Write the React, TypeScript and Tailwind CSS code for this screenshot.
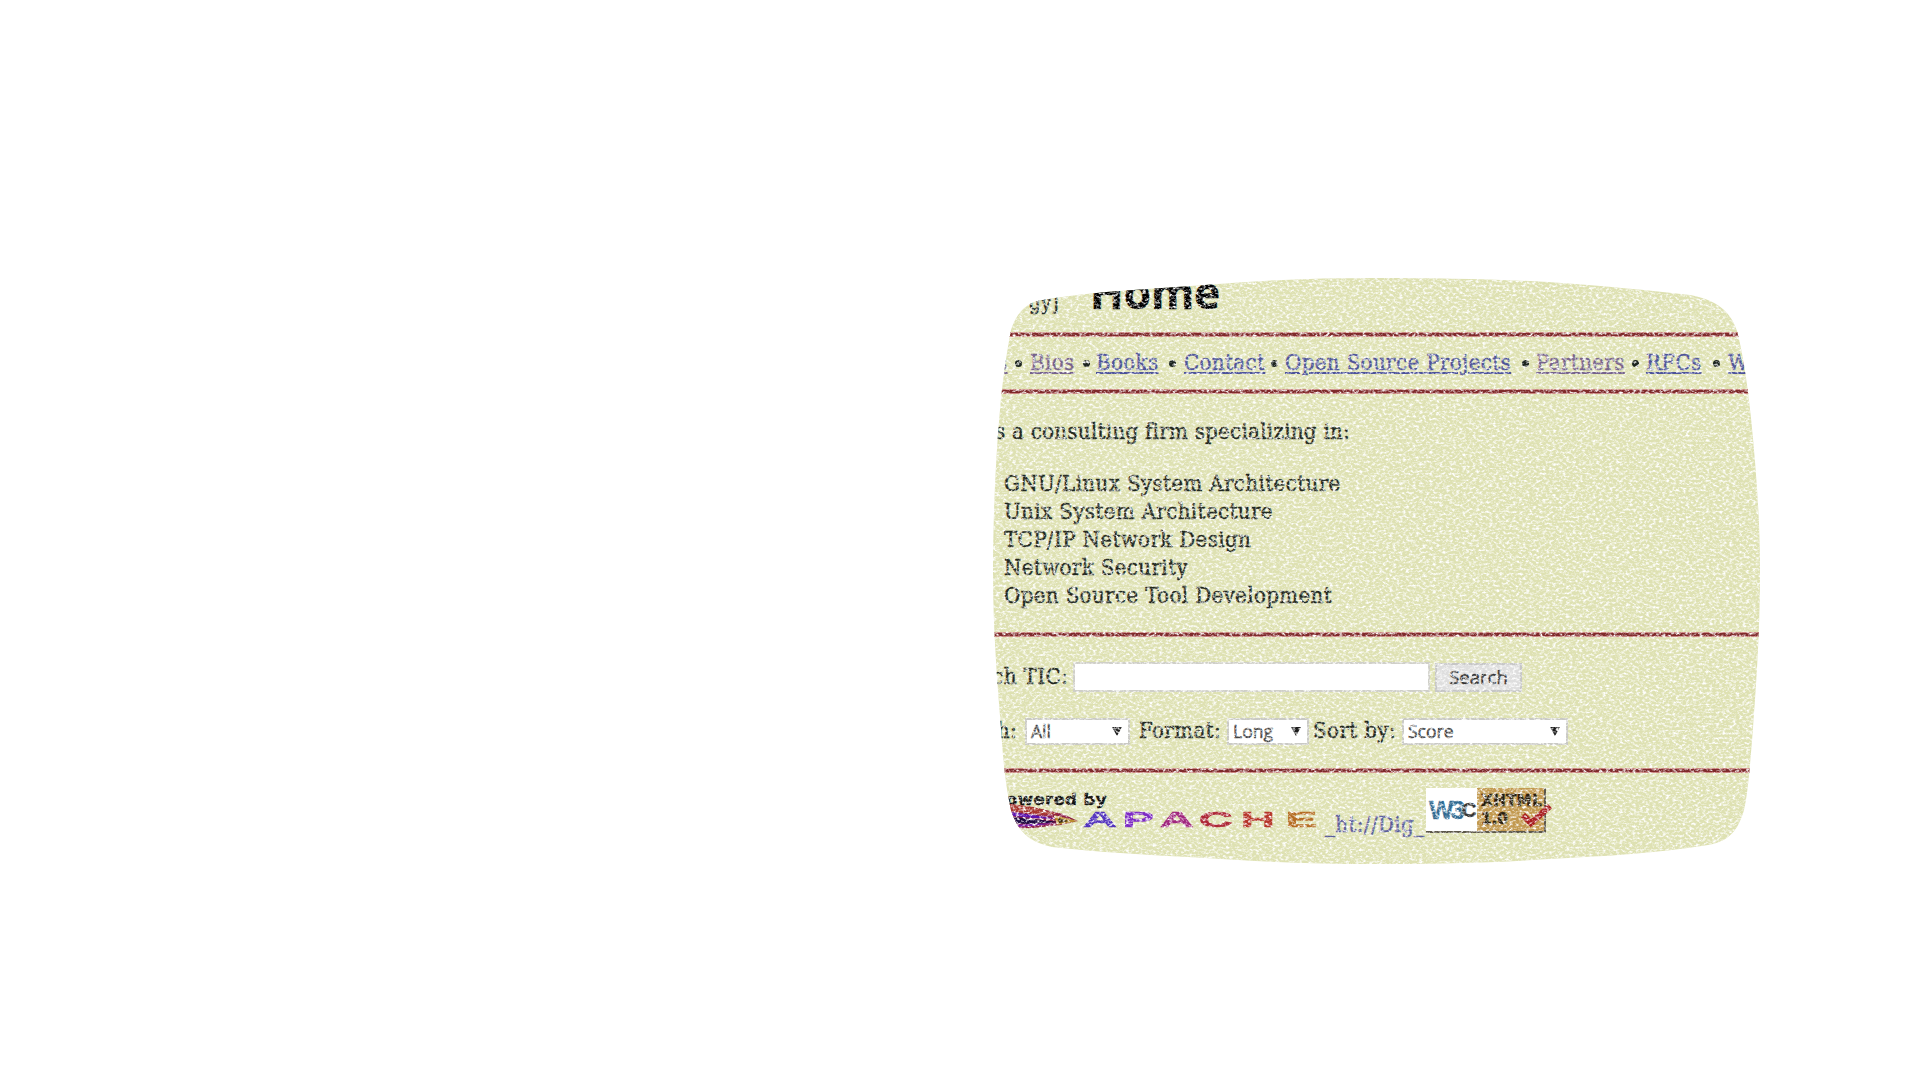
import type { ReactNode } from "react";

const Link = ({ children, visited, width }: { children: string; visited?: boolean; width: string }) => (
  <li className={`${width} flex shrink-0 items-center justify-between`}>
    <a className={visited ? "text-[#75628c] underline decoration-2 underline-offset-2" : "text-[#4d5399] underline decoration-2 underline-offset-2"}>{children}</a>
    <span className="h-[7px] w-[7px] rounded-full bg-[#1c241f]" />
  </li>
);

const Rule = () => <hr className="h-[5px] shrink-0 border-0 border-y border-[#c98580] bg-[#7f2a2b]" />;

const Select = ({ text, width }: { text: string; width: string }) => (
  <span className={`${width} flex h-[27px] shrink-0 items-center justify-between border-2 border-[#c9c9c4] bg-white pr-[6px] pl-[4px] font-['Open_Sans',sans-serif] text-[17.5px] tracking-normal text-[#444] [font-stretch:normal]`}>
    {text}
    <svg width="10" height="9" viewBox="0 0 10 9"><path d="M0 0h10L5 9z" fill="#1c1c1c" /></svg>
  </span>
);

const Letter = ({ children, color, width }: { children: string; color: string; width: string }) => (
  <span className={`${width} ${color} flex justify-center`}>
    <span className="inline-block scale-x-[2.15]">{children}</span>
  </span>
);

const Label = ({ children, width }: { children: ReactNode; width: string }) => (
  <span className={`${width} flex shrink-0 justify-end`}>{children}</span>
);

const Grain = () => (
  <svg className="pointer-events-none absolute inset-0" width="767" height="587">
    <filter id="grain" x="0" y="0" width="100%" height="100%">
      <feTurbulence type="fractalNoise" baseFrequency="0.3 0.42" numOctaves="3" seed="7" />
      <feColorMatrix values="0 0 0 0 1  0 0 0 0 1  0 0 0 0 1  2.8 0 0 0 -1.22" />
    </filter>
    <rect width="767" height="587" filter="url(#grain)" />
  </svg>
);

export default function App() {
  return (
    <main className="h-[1080px] w-[1920px] overflow-hidden bg-white pt-[278px] pl-[993px]">
      <section className="relative flex h-[587px] w-[767px] flex-col overflow-hidden bg-[#dee1b2] font-['DejaVu_Serif',serif] text-[22px] leading-7 tracking-[0.4px] whitespace-nowrap text-[#20261e] [-webkit-text-stroke:0.5px_currentColor] [clip-path:path('M0_293C0_240_3_175_7_132C9_108_13_78_18_52C23_36_33_24_50_22C95_14_155_11_212_7C270_2_325_0_383_0C440_0_500_1_555_4C611_8_655_12_697_17C724_22_738_34_744_53C751_80_755_112_758_140C763_190_767_240_767_293C767_355_763_410_760_450C757_487_755_515_751_532C745_552_737_563_715_567C660_576_610_578_555_581C500_585_440_586_383_586C325_586_270_584_212_580C155_577_105_574_59_569C36_564_25_554_18_532C12_505_10_480_8_450C4_400_0_350_0_293Z')] [font-stretch:condensed]">
        <header className="flex h-[54px] shrink-0 items-start">
          <span className="flex w-[66px] justify-end pt-[11px] text-[20px]">gy]</span>
          <h1 className="ml-[31px] font-['Open_Sans',sans-serif] text-[44px] leading-7 font-bold tracking-normal text-black [font-stretch:normal]">Home</h1>
        </header>
        <Rule />
        <ul className="flex h-[52px] shrink-0 items-center">
          <li className="w-[4px]" />
          <Link width="w-[25px]" visited>s</Link>
          <li className="w-[8px]" />
          <Link width="w-[60px]" visited>Bios</Link>
          <li className="w-[6px]" />
          <Link width="w-[80px]">Books</Link>
          <li className="w-[8px]" />
          <Link width="w-[94px]">Contact</Link>
          <li className="w-[7px]" />
          <Link width="w-[244px]">Open Source Projects</Link>
          <li className="w-[7px]" />
          <Link width="w-[103px]" visited>Partners</Link>
          <li className="w-[7px]" />
          <Link width="w-[74px]">RFCs</Link>
          <li className="w-[8px]" />
          <li><a className="text-[#4d5399] underline decoration-2 underline-offset-2">W</a></li>
        </ul>
        <Rule />
        <div className="h-[238px] shrink-0 pt-[24px]">
          <p className="pl-[2px] tracking-[0.3px]">s a consulting firm specializing in:</p>
          <ul className="pt-[24px] pl-[11px]">
            <li>GNU/Linux System Architecture</li>
            <li>Unix System Architecture</li>
            <li>TCP/IP Network Design</li>
            <li>Network Security</li>
            <li>Open Source Tool Development</li>
          </ul>
        </div>
        <Rule />
        <form className="h-[131px] shrink-0 pt-[25px]">
          <div className="flex h-[30px] items-center">
            <Label width="w-[75px]">ch TIC:</Label>
            <span className="ml-[5px] h-[30px] w-[357px] border-2 border-[#cfcfc8] bg-white" />
            <span className="ml-[5px] flex h-[29px] w-[87px] items-center justify-center border-2 border-[#c6c6c6] bg-[#dedede] font-['Open_Sans',sans-serif] text-[18.5px] tracking-normal text-[#333] [font-stretch:normal]">Search</span>
          </div>
          <div className="mt-[25px] flex h-[28px] items-center">
            <Label width="w-[24px]">h:</Label>
            <span className="w-[8px]" />
            <Select width="w-[105px]" text="All" />
            <Label width="w-[91px]">Format:</Label>
            <span className="w-[6px]" />
            <Select width="w-[82px]" text="Long" />
            <Label width="w-[87px]">Sort by:</Label>
            <span className="w-[6px]" />
            <Select width="w-[166px]" text="Score" />
          </div>
        </form>
        <Rule />
        <footer className="flex shrink-0 items-start">
          <div className="w-[321px] pt-[19px]">
            <p className="pl-[13px] font-['DejaVu_Sans',sans-serif] text-[16.5px] leading-[16px] font-bold text-[#111] [font-stretch:normal]">owered by</p>
            <div className="flex h-[22px] items-start pl-[10px]">
              <svg className="mt-[-5px] shrink-0" width="76" height="28" viewBox="0 0 76 28">
                <path d="M0 0L30 4L60 11L75 18L58 22L30 25L0 26Z" fill="#8d1f48" />
                <path d="M0 0L30 4L56 11L40 12L0 7Z" fill="#a8382f" />
                <path d="M0 8L30 12L56 16L30 15L0 12Z" fill="#5c14b0" />
                <path d="M0 13L30 16L56 19L30 21L0 20Z" fill="#1e0a42" />
                <path d="M8 22L54 20L30 23L8 24Z" fill="#7a1fae" />
                <path d="M51 12L75 18L54 22Z" fill="#b98c2c" />
                <path d="M55 15L66 18L56 20Z" fill="#3a2a10" />
              </svg>
              <p className="mt-[3px] ml-[2px] flex font-['Liberation_Sans',sans-serif] text-[22px] leading-[18px] font-bold tracking-normal">
                <Letter width="w-[38px]" color="text-[#5233bd]">A</Letter>
                <Letter width="w-[39px]" color="text-[#7d2ac4]">P</Letter>
                <Letter width="w-[38px]" color="text-[#a0267e]">A</Letter>
                <Letter width="w-[40px]" color="text-[#ad2636]">C</Letter>
                <Letter width="w-[44px]" color="text-[#b6352a]">H</Letter>
                <Letter width="w-[42px]" color="text-[#b56c22]">E</Letter>
              </p>
            </div>
          </div>
          <a className="ml-[11px] pt-[38px] text-[#5a5d9c]">_ht://Dig_</a>
          <div className="absolute top-[510px] left-[433px] flex h-[45px] w-[120px] border-r-2 border-b-2 border-[#5b5648] bg-[#c2994f] tracking-normal">
            <div className="flex w-[51px] items-center bg-white pl-[3px] font-['Liberation_Sans',sans-serif] text-[26px] font-bold tracking-[-3px] text-[#2f6a92]">
              W3<span className="text-[20px] text-[#333]">C</span>
            </div>
            <div className="pt-[4px] pl-[4px] font-['DejaVu_Sans',sans-serif] text-[15px] leading-[18px] font-bold text-[#261c0e] [font-stretch:normal]">
              <p className="tracking-[0.4px]">XHTML</p>
              <p>1.0</p>
            </div>
            <svg className="absolute top-[14px] left-[95px]" width="32" height="26" viewBox="0 0 32 26">
              <path d="M2 13L10 21L29 4" fill="none" stroke="#a81d20" strokeWidth="6" />
            </svg>
          </div>
        </footer>
        <Grain />
      </section>
    </main>
  );
}
